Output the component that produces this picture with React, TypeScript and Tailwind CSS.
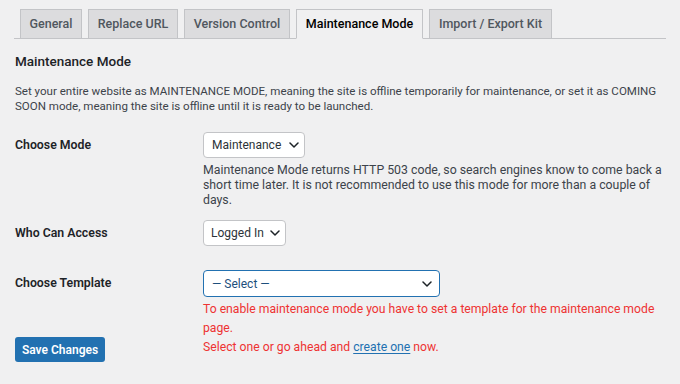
import React from "react";

function Chevron({ className = "" }: { className?: string }) {
  return (
    <svg width="10" height="6" viewBox="0 0 10 6" className={className} fill="none">
      <path d="M1 1l4 4 4-4" stroke="#1d2327" strokeWidth="1.5" strokeLinecap="round" strokeLinejoin="round" />
    </svg>
  );
}

const tabs = [
  { t: "General", w: "w-[62px]" },
  { t: "Replace URL", w: "w-[90px]" },
  { t: "Version Control", w: "w-[106px]" },
  { t: "Maintenance Mode", w: "w-[127px]" },
  { t: "Import / Export Kit", w: "w-[123px]" },
];

export default function App() {
  return (
    <div
      className="w-[680px] h-[384px] overflow-hidden bg-[#f0f0f1] text-[#3c434a]"
      style={{ fontFamily: "Roboto, 'Noto Sans', sans-serif" }}
    >
      <div className="mx-[14px] pt-[9px] flex border-b border-[#c3c4c7] pl-[6px] gap-[6px]">
        {tabs.map(({ t, w }) => {
          const active = t === "Maintenance Mode";
          return (
            <div
              key={t}
              className={
                active
                  ? `${w} h-[30px] -mb-px flex items-center justify-center border border-[#c3c4c7] border-b-[#f0f0f1] bg-[#f0f0f1] text-[12.5px] font-medium text-[#000] whitespace-nowrap`
                  : `${w} h-[30px] -mb-px flex items-center justify-center border border-[#c3c4c7] bg-[#dcdcde] text-[12.5px] font-medium text-[#50575e] whitespace-nowrap`
              }
            >
              {t}
            </div>
          );
        })}
      </div>

      <div className="pl-[15px] pr-[12px]">
        <h2 className="mt-[12px] text-[13.5px] leading-[20px] font-medium text-[#1d2327]">Maintenance Mode</h2>
        <p className="mt-[13px] text-[11.55px] leading-[15px]">
          Set your entire website as MAINTENANCE MODE, meaning the site is offline temporarily for maintenance, or set it as COMING SOON mode, meaning the site is offline until it is ready to be launched.
        </p>

        <div className="mt-[18px] flex">
          <div className="w-[188px] shrink-0 h-[26px] flex items-center text-[12.3px] font-semibold text-[#1d2327]">Choose Mode</div>
          <div className="flex-1">
            <div className="w-[102px] h-[26px] bg-white border border-[#c3c4c7] rounded-[4px] flex items-center justify-between pl-[8px] pr-[5px] text-[12px] text-[#2c3338] whitespace-nowrap">
              <span>Maintenance</span>
              <Chevron />
            </div>
            <p className="mt-[5px] text-[12.3px] leading-[15px]">
              Maintenance Mode returns HTTP 503 code, so search engines know to come back a short time later. It is not recommended to use this mode for more than a couple of days.
            </p>
          </div>
        </div>

        <div className="mt-[12px] flex">
          <div className="w-[188px] shrink-0 h-[26px] flex items-center text-[12.3px] font-semibold text-[#1d2327]">Who Can Access</div>
          <div className="w-[83px] h-[26px] bg-white border border-[#c3c4c7] rounded-[4px] flex items-center justify-between pl-[7px] pr-[5px] text-[12px] text-[#2c3338] whitespace-nowrap">
            <span>Logged In</span>
            <Chevron />
          </div>
        </div>

        <div className="mt-[24px] flex">
          <div className="w-[188px] shrink-0">
            <div className="h-[27px] flex items-center text-[12.3px] font-semibold text-[#1d2327]">Choose Template</div>
            <button className="mt-[40px] w-[90px] h-[25px] rounded-[3px] bg-[#2271b1] text-white text-[12px] font-semibold flex items-center justify-center">
              Save Changes
            </button>
          </div>
          <div className="flex-1">
            <div className="w-[237px] h-[27px] bg-white border border-[#2271b1] rounded-[4px] flex items-center justify-between pl-[8px] pr-[7px] text-[12px] text-[#1d4f7c] whitespace-nowrap">
              <span>— Select —</span>
              <Chevron />
            </div>
            <div className="mt-[3px] pr-[8px] text-[12.2px] leading-[19px] text-[#ee3333]">
              <p>To enable maintenance mode you have to set a template for the maintenance mode page.</p>
              <p>
                Select one or go ahead and{" "}
                <a className="text-[#2271b1] underline underline-offset-2">create one</a> now.
              </p>
            </div>
          </div>
        </div>
      </div>
    </div>
  );
}
